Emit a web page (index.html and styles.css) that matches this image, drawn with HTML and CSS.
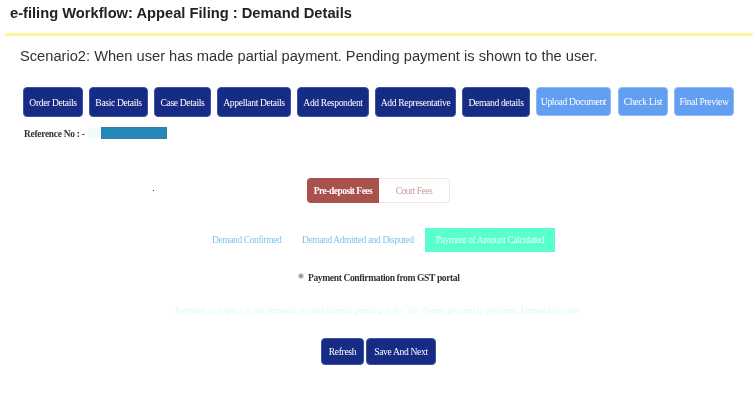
FILE: index.html
```html
<!DOCTYPE html>
<html lang="en">
	<head>
		<meta charset="UTF-8" />
		<meta name="viewport" content="width=device-width, initial-scale=1.0" />
		<title>e-filing Workflow</title>
		<link rel="stylesheet" href="styles.css">
	</head>
	<body>
		<header class="title-bar">
			<h1>e-filing Workflow: Appeal Filing : Demand Details</h1>
		</header>
		<p class="scenario">Scenario2: When user has made partial payment. Pending payment is shown to the user.</p>
		<nav class="steps">
			<a class="btn btn-order">Order Details</a>
			<a class="btn btn-basic">Basic Details</a>
			<a class="btn btn-case">Case Details</a>
			<a class="btn btn-appellant">Appellant Details</a>
			<a class="btn btn-respondent">Add Respondent</a>
			<a class="btn btn-representative">Add Representative</a>
			<a class="btn btn-demand">Demand details</a>
			<a class="btn btn-light btn-upload">Upload Document</a>
			<a class="btn btn-light btn-check">Check List</a>
			<a class="btn btn-light btn-final">Final Preview</a>
		</nav>
		<div class="reference">
			<span class="reference-label">Reference No : -</span>
			<span class="reference-faint"></span>
			<span class="reference-value"></span>
		</div>
		<div class="dot-row"><span class="dot"></span></div>
		<div class="fee-tabs">
			<a class="fee-tab fee-tab-active">Pre-deposit Fees</a>
			<a class="fee-tab">Court Fees</a>
		</div>
		<div class="demand-tabs">
			<a class="demand-tab demand-confirmed">Demand Confirmed</a>
			<a class="demand-tab demand-admitted">Demand Admitted and Disputed</a>
			<a class="demand-tab demand-tab-active">Payment of Amount Calculated</a>
		</div>
		<div class="confirm">
			<span class="radio"></span>
			<span>Payment Confirmation from GST portal</span>
		</div>
		<p class="notice">Payment in respect of the demand/ tax and interest pending is Rs. 10/- Please proceed to payment. Demand payable</p>
		<div class="actions">
			<a class="btn btn-refresh">Refresh</a>
			<a class="btn btn-save">Save And Next</a>
		</div>
	</body>
</html>
```

FILE: styles.css
```css
:root {
	box-sizing: border-box;
}
*,
::before,
::after {
	box-sizing: inherit;
}
body {
	margin: 0;
	background-color: #fff;
	font-family: "Liberation Serif", serif;
	overflow: hidden;
}
.title-bar {
	height: 36px;
	margin-left: 5px;
	padding: 5px 0 0 5px;
	border-bottom: 3px solid #fff59d;
}
h1 {
	margin: 0;
	font: bold 14.7px/17px "Liberation Sans", sans-serif;
	color: #222;
	filter: blur(0.35px);
}
.scenario {
	margin: 11px 0 0 20px;
	font: 14.67px/18px "Liberation Sans", sans-serif;
	color: #333;
	filter: blur(0.35px);
}
.steps {
	display: flex;
	gap: 6px;
	margin: 22px 0 0 23px;
}
.btn {
	display: flex;
	align-items: center;
	justify-content: center;
	height: 30px;
	font-size: 9.6px;
	letter-spacing: -0.35px;
	color: #fff;
	white-space: nowrap;
	background-color: #162c84;
	border: 1px solid #3f54a0;
	border-radius: 4px;
	filter: blur(0.35px);
}
.btn-light {
	height: 29px;
	background-color: #629ff0;
	border-color: #8db9f4;
}
.btn-order { width: 60px; }
.btn-basic { width: 59px; }
.btn-case { width: 57px; }
.btn-appellant { width: 74px; }
.btn-respondent { width: 72px; }
.btn-representative { width: 81px; }
.btn-demand { width: 68px; }
.btn-upload { width: 75px; }
.btn-check { width: 50px; margin-left: 1px; }
.btn-final { width: 60px; }
.reference {
	display: flex;
	align-items: center;
	height: 12px;
	margin: 10px 0 0 24px;
}
.reference-label {
	width: 64px;
	padding-top: 2px;
	font-size: 9.4px;
	letter-spacing: -0.25px;
	font-weight: bold;
	color: #333;
	filter: blur(0.35px);
}
.reference-faint {
	width: 13px;
	height: 10px;
	background-color: #f3fafd;
}
.reference-value {
	width: 66px;
	height: 12px;
	background-color: #2389b9;
	border: 1px solid #3a7f9f;
}
.dot-row {
	height: 1px;
	margin: 51px 0 0 153px;
}
.dot {
	display: block;
	width: 1px;
	height: 1px;
	background-color: #222;
}
.fee-tabs {
	display: flex;
	justify-content: center;
	width: 143px;
	margin: -13px 0 0 307px;
	font-size: 9.5px;
	letter-spacing: -0.5px;
	filter: blur(0.35px);
}
.fee-tab {
	display: flex;
	align-items: center;
	justify-content: center;
	width: 71px;
	height: 25px;
	color: #c99a98;
	background-color: #fff;
	border: 1px solid #f8e2e2;
	border-left: 0;
	border-radius: 0 4px 4px 0;
}
.fee-tab-active {
	width: 72px;
	font-weight: bold;
	color: #fff;
	background-color: #a9524c;
	border: 0;
	border-radius: 4px 0 0 4px;
}
.demand-tabs {
	display: flex;
	align-items: center;
	height: 24px;
	margin: 25px 0 0 212px;
	font-size: 9.5px;
	letter-spacing: -0.4px;
	color: #7cc4f2;
	filter: blur(0.35px);
}
.demand-confirmed {
	width: 90px;
}
.demand-admitted {
	width: 123px;
}
.demand-tab-active {
	display: flex;
	align-items: center;
	justify-content: center;
	width: 130px;
	height: 24px;
	color: #e8fff8;
	background-color: #5affcf;
}
.confirm {
	display: flex;
	align-items: center;
	gap: 4px;
	height: 14px;
	margin: 18px 0 0 298px;
	font-size: 9.6px;
	letter-spacing: -0.4px;
	font-weight: bold;
	color: #333;
	filter: blur(0.35px);
}
.radio {
	width: 6px;
	height: 6px;
	margin-bottom: 3px;
	background-color: #999;
	border: 1px solid #ddd;
	border-radius: 50%;
}
.notice {
	margin: 20px 0 0 175px;
	font-size: 8.77px;
	line-height: 12px;
	color: #d8fbfb;
	white-space: nowrap;
	filter: blur(0.35px);
}
.actions {
	display: flex;
	gap: 2px;
	margin: 22px 0 0 321px;
}
.btn-refresh,
.btn-save {
	height: 27px;
}
.btn-refresh { width: 43px; }
.btn-save { width: 70px; }
```
